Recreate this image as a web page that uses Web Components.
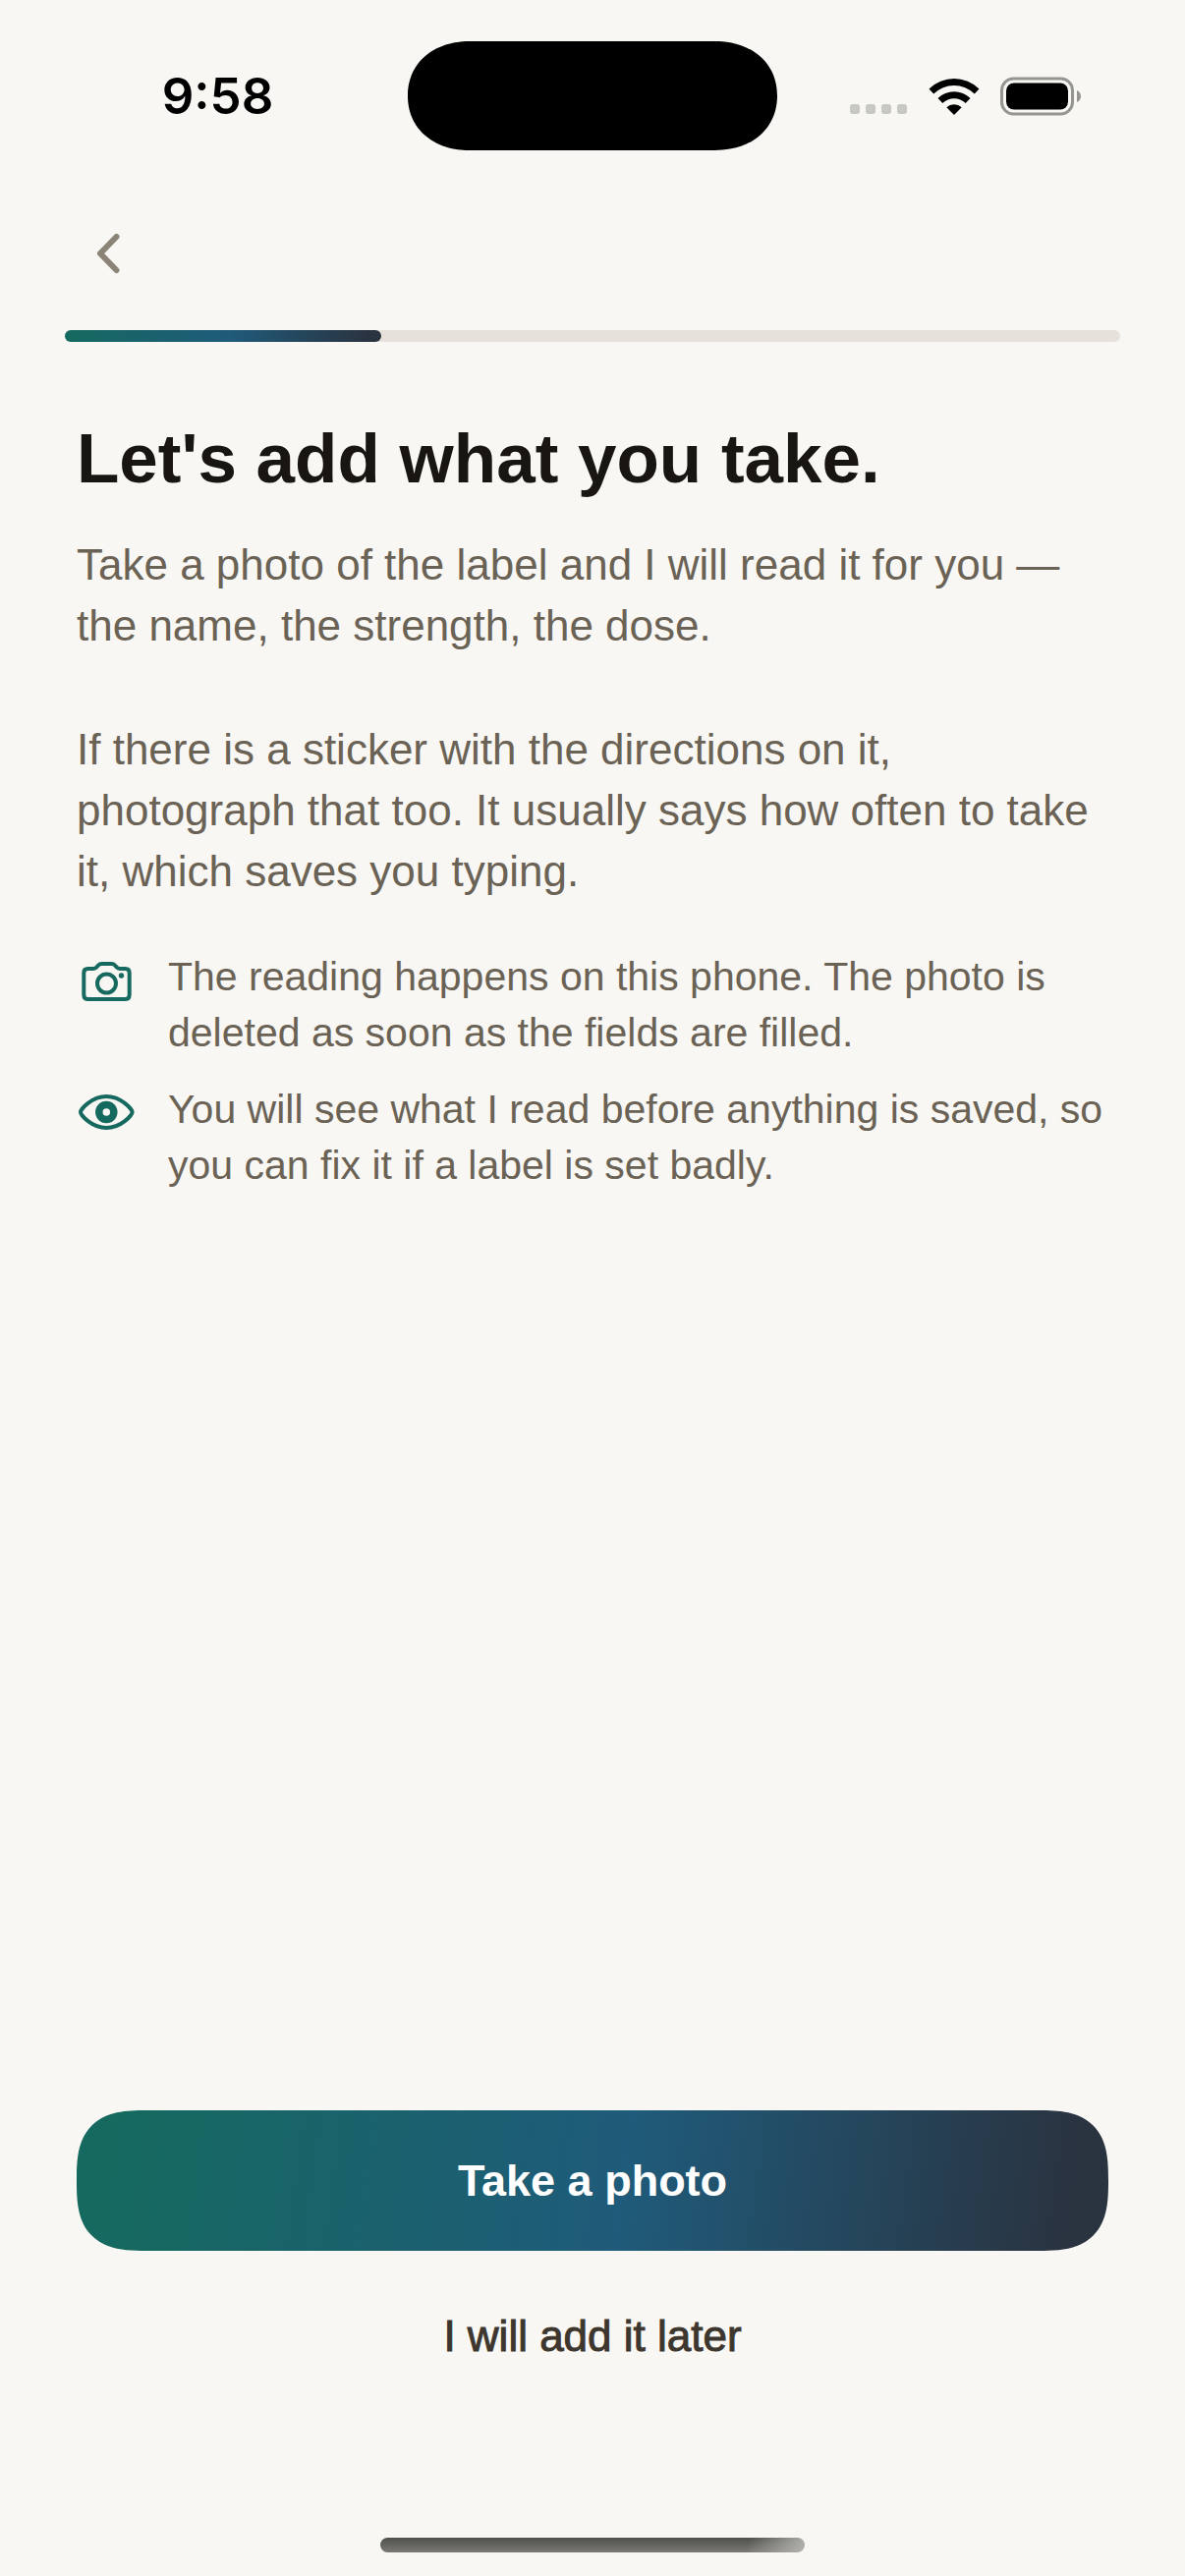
<!DOCTYPE html>
<html lang="en">
<head>
<meta charset="utf-8">
<meta name="viewport" content="width=device-width, initial-scale=1">
<title>Add what you take</title>
<style>
    :root{
        --bg: #f8f7f3;
        --ink: #191611;
        --ink-soft: #3d362e;
        --muted: #6b6256;
        --chevron: #8b8376;
        --track: #e6e1da;
        --green: #15695f;
        --blue: #1f5b7a;
        --night: #2a3340;
        --sans: "Liberation Sans", Arial, sans-serif;
    }
    body{
        margin: 0;
        background: var(--bg);
        color: var(--muted);
        font-family: var(--sans);
    }
</style>
</head>
<body>
<onboarding-screen>
    <status-bar slot="status" time="9:58"></status-bar>
    <step-header slot="header" value="30"></step-header>
    <span slot="title">Let's add what you take.</span>
    <p slot="intro">Take a photo of the label and I will read it for you — the name, the strength, the dose.</p>
    <p slot="intro">If there is a sticker with the directions on it, photograph that too. It usually says how often to take it, which saves you typing.</p>
    <info-row slot="notes" icon="camera">The reading happens on this phone. The photo is deleted as soon as the fields are filled.</info-row>
    <info-row slot="notes" icon="eye">You will see what I read before anything is saved, so you can fix it if a label is set badly.</info-row>
    <action-button slot="actions" kind="primary">Take a photo</action-button>
    <action-button slot="actions" kind="plain">I will add it later</action-button>
    <home-indicator slot="home"></home-indicator>
</onboarding-screen>

<script>
class BaseElement extends HTMLElement{
    constructor() {
        super()
        this.attachShadow({ mode: 'open' })
    }
    connectedCallback() {
        const template = document.createElement('template')
        template.innerHTML = `${this.getStyles()}${this.getTemplate()}`
        this.shadowRoot.replaceChildren(template.content.cloneNode(true))
    }
}

class StatusBar extends BaseElement{
    getTemplate() {
        return `
            <time>${this.getAttribute('time')}</time>
            <div class="island"></div>
            <div class="status">
                <div class="signal"><i></i><i></i><i></i><i></i></div>
                <svg class="wifi" width="52" height="38" viewBox="0 0 52 38" role="img" aria-label="Wi-Fi">
                    <path d="M0.5 11.5A36.5 36.5 0 0 1 51.5 11.5L46.8 16.6A29.5 29.5 0 0 0 5.2 16.6Z"/>
                    <path d="M9.5 21A23.8 23.8 0 0 1 42.5 21L37.7 26A17 17 0 0 0 14.3 26Z"/>
                    <path d="M18.3 30.3A11.2 11.2 0 0 1 33.7 30.3L26 38Z"/>
                </svg>
                <svg class="battery" width="83" height="40" viewBox="0 0 83 40" role="img" aria-label="Battery full">
                    <rect x="1.5" y="2" width="72" height="36" rx="12" fill="none" stroke="#959592" stroke-width="3"/>
                    <rect x="6" y="6.500" width="63" height="27" rx="8"/>
                    <path d="M78 14C80.7 15 82 17.5 82 20S80.7 25 78 26Z" fill="#959592"/>
                </svg>
            </div>
        `
    }
    getStyles() {
        return `
            <style>
                :host{
                    display: grid;
                    grid-template-columns: 1fr 376px 1fr;
                    align-items: center;
                    padding: 42px 0 39px;
                    color: #000;
                }
                time{
                    font: 600 51px/60px Inter, var(--sans);
                    text-align: center;
                    padding-left: 28px;
                }
                .island{
                    height: 111px;
                    border-radius: 56px;
                    background: #000;
                }
                @supports (corner-shape: superellipse(1)){
                    .island{
                        border-radius: 64px / 56px;
                        corner-shape: superellipse(1.1);
                    }
                }
                .status{
                    display: flex;
                    align-items: center;
                    justify-content: flex-end;
                    padding-right: 105px;
                }
                .signal{
                    display: flex;
                    gap: 6px;
                    align-self: flex-end;
                    padding-bottom: 2px;
                    margin-right: 22px;
                }
                .signal i{
                    width: 10px;
                    height: 10px;
                    border-radius: 3px;
                    background: #c7c8c3;
                }
                .wifi{
                    margin-right: 21px;
                }
            </style>
        `
    }
}

class StepHeader extends BaseElement{
    getTemplate() {
        return `
            <button type="button" aria-label="Back">
                <svg width="24" height="44" viewBox="0 0 24 44" aria-hidden="true">
                    <path d="M20.5 5L4 22L20.5 39" fill="none" stroke="currentColor" stroke-width="6" stroke-linecap="round" stroke-linejoin="round"/>
                </svg>
            </button>
            <div class="track" role="progressbar" aria-label="Setup progress" aria-valuemin="0" aria-valuemax="100" aria-valuenow="${this.getAttribute('value')}">
                <div class="fill" style="width: ${this.getAttribute('value')}%"></div>
            </div>
        `
    }
    getStyles() {
        return `
            <style>
                :host{
                    display: block;
                    padding: 0 66px;
                }
                button{
                    display: flex;
                    align-items: center;
                    justify-content: center;
                    width: 88px;
                    height: 132px;
                    margin: 0 0 12px;
                    padding: 0;
                    border: 0;
                    background: none;
                    color: var(--chevron);
                }
                .track{
                    height: 12px;
                    border-radius: 6px;
                    background: var(--track);
                }
                .fill{
                    height: 100%;
                    border-radius: 6px;
                    background: linear-gradient(92deg, var(--green), var(--blue) 52%, var(--night) 96%);
                }
            </style>
        `
    }
}

class InfoRow extends BaseElement{
    getIcon() {
        if( this.getAttribute('icon') === 'camera') {
            return `
                <g fill="none" stroke="currentColor" stroke-width="4" stroke-linejoin="round">
                    <path d="M11.5 20H17C18.5 20 19.5 19.5 20.5 18.3L22 16.5C23 15.4 24 15 25.5 15H35.5C37 15 38 15.4 39 16.5L40.5 18.3C41.5 19.5 42.5 20 44 20H49.5C52.3 20 53.7 21.4 53.7 24.2V46.8C53.7 49.6 52.3 51 49.5 51H11.5C8.7 51 7.3 49.6 7.3 46.8V24.2C7.3 21.4 8.7 20 11.5 20Z"/>
                    <circle cx="30.5" cy="35" r="9.5"/>
                </g>
                <circle cx="45.5" cy="27" r="2.7" fill="currentColor"/>
            `
        }
        return `
            <path d="M4 31C4 28 15.500 15 30.3 15S56.6 28 56.6 31S45.100 47 30.3 47S4 34 4 31Z" fill="none" stroke="currentColor" stroke-width="4"/>
            <circle cx="30.3" cy="31" r="7.5" fill="none" stroke="currentColor" stroke-width="7.5"/>
        `
    }
    getTemplate() {
        return `
            <svg width="60" height="60" viewBox="0 0 60 60" aria-hidden="true">${this.getIcon()}</svg>
            <p><slot></slot></p>
        `
    }
    getStyles() {
        return `
            <style>
                :host{
                    display: flex;
                    align-items: flex-start;
                    gap: 33px;
                    font-size: 41px;
                    line-height: 57px;
                }
                svg{
                    flex: none;
                    color: var(--green);
                }
                p{
                    margin: 0;
                }
            </style>
        `
    }
}

class ActionButton extends BaseElement{
    getTemplate() {
        return `<button type="button" class="${this.getAttribute('kind')}"><slot></slot></button>`
    }
    getStyles() {
        return `
            <style>
                :host{
                    display: block;
                }
                button{
                    display: block;
                    width: 100%;
                    margin: 0;
                    border: 0;
                    font-family: inherit;
                }
                .primary{
                    padding: 40px;
                    border-radius: 60px;
                    background: linear-gradient(98deg, var(--green) 4%, var(--blue) 53%, var(--night) 96%);
                    color: #fff;
                    font-size: 45px;
                    font-weight: 700;
                    line-height: 63px;
                }
                @supports (corner-shape: superellipse(1)){
                    .primary{
                        border-radius: 71px;
                        corner-shape: superellipse(1.5);
                    }
                }
                .plain{
                    padding: 34px;
                    background: none;
                    color: var(--ink-soft);
                    font-size: 44px;
                    line-height: 62px;
                    -webkit-text-stroke: 1px currentColor;
                }
            </style>
        `
    }
}

class HomeIndicator extends BaseElement{
    getTemplate() {
        return `<div></div>`
    }
    getStyles() {
        return `
            <style>
                :host{
                    display: flex;
                    justify-content: center;
                    padding-bottom: 24px;
                }
                div{
                    width: 432px;
                    height: 15px;
                    border-radius: 8px;
                    background:
                        linear-gradient(110deg, transparent 86%, #b4b3af),
                        linear-gradient(#4d504b, #7b7975);
                }
            </style>
        `
    }
}

class OnboardingScreen extends BaseElement{
    getTemplate() {
        return `
            <slot name="status"></slot>
            <slot name="header"></slot>
            <main>
                <h1><slot name="title"></slot></h1>
                <div class="intro"><slot name="intro"></slot></div>
                <div class="notes"><slot name="notes"></slot></div>
            </main>
            <footer><slot name="actions"></slot></footer>
            <slot name="home"></slot>
        `
    }
    getStyles() {
        return `
            <style>
                :host{
                    display: flex;
                    flex-direction: column;
                    min-height: 100vh;
                }
                main{
                    flex: 1;
                    padding: 77px 78px 48px;
                }
                h1{
                    margin: 0 0 35px;
                    color: var(--ink);
                    font-size: 71px;
                    font-weight: 700;
                    line-height: 84px;
                }
                .intro{
                    display: flex;
                    flex-direction: column;
                    gap: 64px;
                    margin-bottom: 48px;
                    font-size: 44px;
                    line-height: 62px;
                }
                ::slotted(p){
                    margin: 0;
                }
                .notes{
                    display: flex;
                    flex-direction: column;
                    gap: 21px;
                }
                footer{
                    display: flex;
                    flex-direction: column;
                    gap: 22px;
                    padding: 0 78px 140px;
                }
            </style>
        `
    }
}

customElements.define('status-bar', StatusBar)
customElements.define('step-header', StepHeader)
customElements.define('info-row', InfoRow)
customElements.define('action-button', ActionButton)
customElements.define('home-indicator', HomeIndicator)
customElements.define('onboarding-screen', OnboardingScreen)
</script>
</body>
</html>
